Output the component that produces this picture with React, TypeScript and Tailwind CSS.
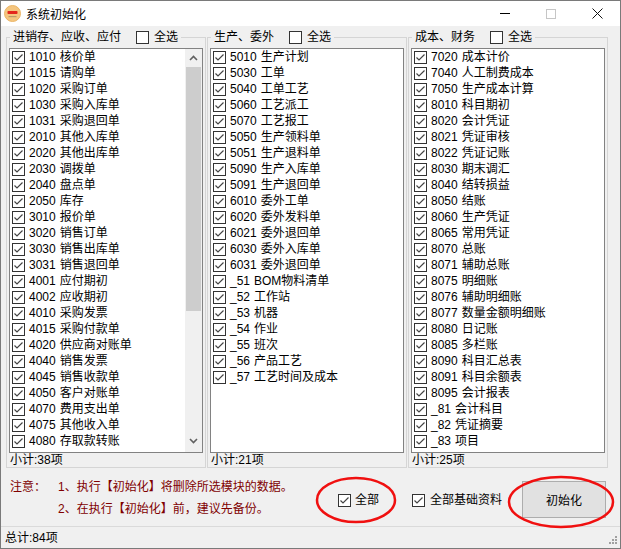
import React from "react";

type Item = [string, string];

const leftItems: Item[] = [
  ["1010", "核价单"], ["1015", "请购单"], ["1020", "采购订单"], ["1030", "采购入库单"], ["1031", "采购退回单"],
  ["2010", "其他入库单"], ["2020", "其他出库单"], ["2030", "调拨单"], ["2040", "盘点单"], ["2050", "库存"],
  ["3010", "报价单"], ["3020", "销售订单"], ["3030", "销售出库单"], ["3031", "销售退回单"], ["4001", "应付期初"],
  ["4002", "应收期初"], ["4010", "采购发票"], ["4015", "采购付款单"], ["4020", "供应商对账单"], ["4040", "销售发票"],
  ["4045", "销售收款单"], ["4050", "客户对账单"], ["4070", "费用支出单"], ["4075", "其他收入单"], ["4080", "存取款转账"],
];

const midItems: Item[] = [
  ["5010", "生产计划"], ["5030", "工单"], ["5040", "工单工艺"], ["5060", "工艺派工"], ["5070", "工艺报工"],
  ["5050", "生产领料单"], ["5051", "生产退料单"], ["5090", "生产入库单"], ["5091", "生产退回单"], ["6010", "委外工单"],
  ["6020", "委外发料单"], ["6021", "委外退回单"], ["6030", "委外入库单"], ["6031", "委外退回单"], ["_51", "BOM物料清单"],
  ["_52", "工作站"], ["_53", "机器"], ["_54", "作业"], ["_55", "班次"], ["_56", "产品工艺"], ["_57", "工艺时间及成本"],
];

const rightItems: Item[] = [
  ["7020", "成本计价"], ["7040", "人工制费成本"], ["7050", "生产成本计算"], ["8010", "科目期初"], ["8020", "会计凭证"],
  ["8021", "凭证审核"], ["8022", "凭证记账"], ["8030", "期末调汇"], ["8040", "结转损益"], ["8050", "结账"],
  ["8060", "生产凭证"], ["8065", "常用凭证"], ["8070", "总账"], ["8071", "辅助总账"], ["8075", "明细账"],
  ["8076", "辅助明细账"], ["8077", "数量金额明细账"], ["8080", "日记账"], ["8085", "多栏账"], ["8090", "科目汇总表"],
  ["8091", "科目余额表"], ["8095", "会计报表"], ["_81", "会计科目"], ["_82", "凭证摘要"], ["_83", "项目"],
];

function Check({ checked }: { checked: boolean }) {
  return (
    <svg width="13" height="13" viewBox="0 0 13 13" className="shrink-0">
      <rect x="0.5" y="0.5" width="12" height="12" fill="#fff" stroke="#333" />
      {checked && <path d="M2.5 6.5 L5 9 L10.5 3.5" fill="none" stroke="#444" strokeWidth="1.2" />}
    </svg>
  );
}

function Chevron({ up }: { up?: boolean }) {
  return (
    <svg width="9" height="6" viewBox="0 0 9 6">
      <path d={up ? "M1 5 L4.5 1.5 L8 5" : "M1 1 L4.5 4.5 L8 1"} fill="none" stroke="#606060" strokeWidth="1.6" />
    </svg>
  );
}

function Group({ title, items, total, scroll }: { title: string; items: Item[]; total: number; scroll?: boolean }) {
  return (
    <fieldset className="w-[200px] h-[438px] border border-[#d5d5d5] px-[2px]">
      <legend className="ml-[1px] px-[3px]">
        <span className="flex items-center h-[14px] leading-[14px]">
          <span>{title}</span>
          <span className="ml-[15px]"><Check checked={false} /></span>
          <span className="ml-[5px]">全选</span>
        </span>
      </legend>
      <div className="mt-[4px] h-[405px] border border-[#828282] bg-white flex">
        <ul className="flex-1">
          {items.map(([code, name]) => (
            <li key={code} className="h-[16px] flex items-center pl-[2px] whitespace-nowrap">
              <Check checked />
              <span className="ml-[4px]">{code}</span>
              <span className="ml-[4px]">{name}</span>
            </li>
          ))}
        </ul>
        {scroll && (
          <div className="w-[17px] bg-[#f0f0f0] flex flex-col items-center">
            <div className="h-[17px] flex items-center justify-center"><Chevron up /></div>
            <div className="mt-[1px] w-[15px] h-[244px] bg-[#cdcdcd]" />
            <div className="flex-1" />
            <div className="h-[17px] flex items-center justify-center mb-[3px]"><Chevron /></div>
          </div>
        )}
      </div>
      <div className="h-[14px] leading-[14px] pl-[1px]">小计:{total}项</div>
    </fieldset>
  );
}

export default function App() {
  return (
    <div className="relative w-[621px] h-[549px] border border-[#7a7a7a] bg-[#f0f0f0] flex flex-col text-[12px] text-black font-['Liberation_Sans','Noto_Sans_CJK_SC',sans-serif]">
      <div className="h-[25px] bg-white flex items-center">
        <svg width="17" height="17" viewBox="0 0 17 17" className="ml-[3px]">
          <circle cx="8.5" cy="8.5" r="8" fill="#f5c67f" stroke="#eab567" />
          <rect x="3.5" y="6" width="10" height="3" rx="0.8" fill="#e3261d" />
          <rect x="4.5" y="11" width="8" height="1.2" fill="#b99a6a" />
        </svg>
        <span className="ml-[5px] font-['Noto_Sans_CJK_SC',sans-serif] text-[12px]">系统初始化</span>
        <div className="flex-1" />
        <div className="w-[46px] h-[25px] flex items-center justify-center">
          <div className="w-[10px] h-[1px] bg-black" />
        </div>
        <div className="w-[46px] h-[25px] flex items-center justify-center">
          <div className="w-[10px] h-[10px] border border-[#c6c6c6]" />
        </div>
        <div className="w-[46px] h-[25px] flex items-center justify-center">
          <svg width="11" height="11" viewBox="0 0 11 11">
            <path d="M0.5 0.5 L10.5 10.5 M10.5 0.5 L0.5 10.5" stroke="#111" strokeWidth="1" />
          </svg>
        </div>
      </div>

      <div className="mt-[4px] flex pl-[5px]">
        <Group title="进销存、应收、应付" items={leftItems} total={38} scroll />
        <div className="ml-[1px]"><Group title="生产、委外" items={midItems} total={21} /></div>
        <div className="ml-[1px]"><Group title="成本、财务" items={rightItems} total={25} /></div>
      </div>

      <div className="h-[58px] flex items-start">
        <div className="mt-[8px] ml-[9px] w-[328px] flex text-[#800000] leading-[22px]">
          <div className="w-[48px]">注意：</div>
          <div>
            <div>1、执行【初始化】将删除所选模块的数据。</div>
            <div>2、在执行【初始化】前，建议先备份。</div>
          </div>
        </div>
        <div className="mt-[25px] flex items-center h-[14px]">
          <Check checked />
          <span className="ml-[4px]">全部</span>
        </div>
        <div className="mt-[25px] ml-[33px] flex items-center h-[14px]">
          <Check checked />
          <span className="ml-[5px]">全部基础资料</span>
        </div>
        <button
          type="button"
          className="mt-[13px] ml-[20px] w-[84px] h-[37px] bg-[#e1e1e1] border border-[#adadad] flex items-center justify-center font-['Noto_Sans_CJK_SC',sans-serif] text-[12px]"
        >
          初始化
        </button>
      </div>

      <div className="h-[22px] border-t border-[#dadada] flex items-center pl-[4px]">
        <span>总计:84项</span>
        <div className="flex-1" />
        <svg width="12" height="12" viewBox="0 0 12 12" className="mr-[2px] mt-[6px]">
          {[[9, 1], [6, 4], [9, 4], [3, 7], [6, 7], [9, 7]].map(([x, y]) => (
            <rect key={`${x}-${y}`} x={x} y={y} width="2" height="2" fill="#a0a0a0" />
          ))}
        </svg>
      </div>

      <svg className="pointer-events-none absolute inset-0" width="619" height="547" viewBox="0 0 619 547">
        <ellipse cx="355" cy="499" rx="39" ry="22" fill="none" stroke="#f01010" strokeWidth="2.5" />
        <ellipse cx="560" cy="501" rx="52" ry="25" fill="none" stroke="#f01010" strokeWidth="2.5" />
      </svg>
    </div>
  );
}
